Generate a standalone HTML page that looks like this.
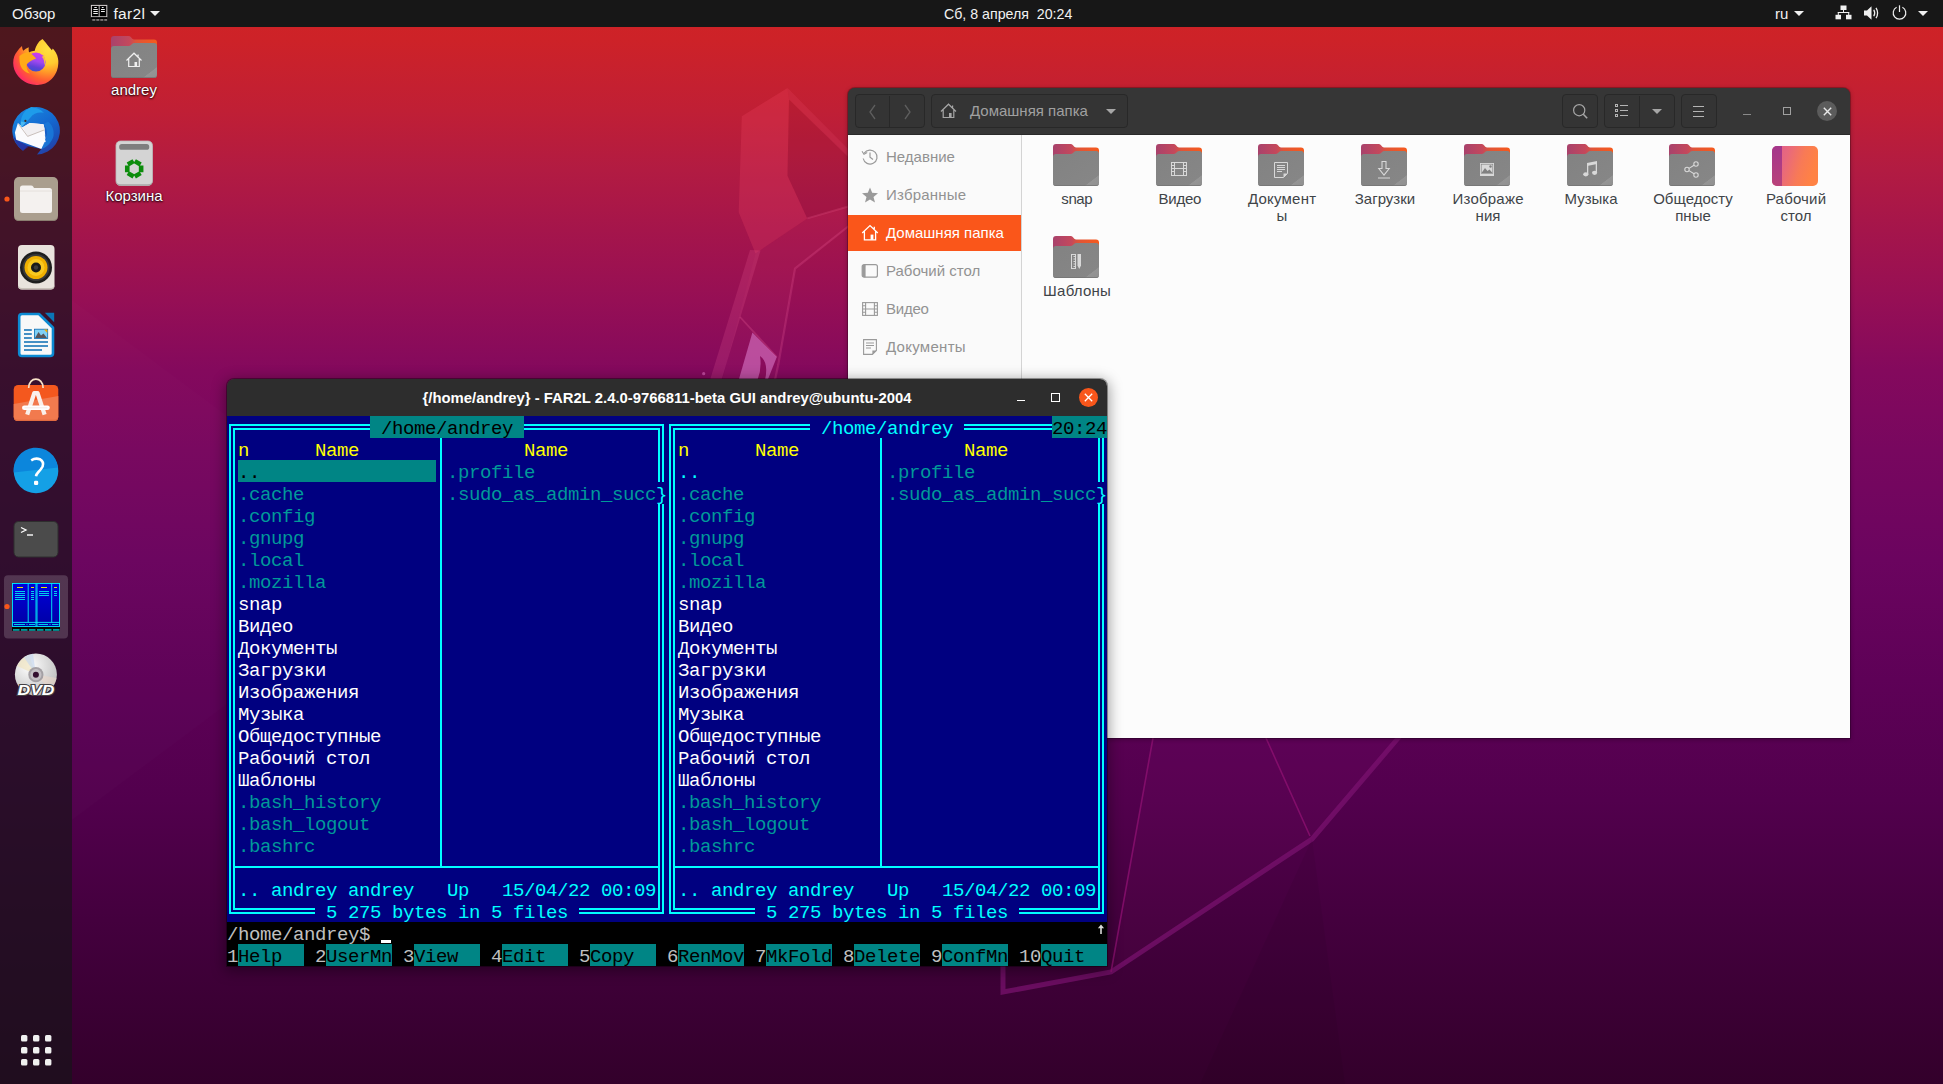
<!DOCTYPE html>
<html><head><meta charset="utf-8">
<style>
*{box-sizing:border-box;margin:0;padding:0}
html,body{width:1943px;height:1084px;overflow:hidden;background:#3a0432}
body{position:relative;font-family:"Liberation Sans",sans-serif;color:#fff}
.abs{position:absolute}
#wall{position:absolute;left:0;top:0;width:1943px;height:1084px;
 background:linear-gradient(180deg,#d02325 0px,#cd2228 40px,#c01f35 110px,#b21b42 170px,#a5154b 230px,#960f55 300px,#84095d 370px,#78075f 450px,#6b045f 560px,#5e0157 680px,#52004d 800px,#44003e 920px,#33002b 1084px);}
#topbar{position:absolute;left:0;top:0;width:1943px;height:27px;background:#171717;font-size:15px}
#dock{position:absolute;left:0;top:27px;width:72px;height:1057px;background:rgba(24,19,25,0.70)}
#far{position:absolute;left:227px;top:379px;width:880px;height:587px;border-radius:7px 7px 0 0;overflow:hidden;box-shadow:0 3px 14px 2px rgba(0,0,0,0.38),0 0 0 1px rgba(0,0,0,0.35)}
#far i{position:absolute;display:block}
#far b{position:absolute;display:block;font:normal 19px/22px "Liberation Mono",monospace;letter-spacing:-0.4019px;white-space:pre;height:22px}
#fartitle{position:absolute;left:0;top:0;width:880px;height:37px;background:#2d2d2d}
#fartxt{position:absolute;left:0;top:0;width:880px;text-align:center;font:bold 14.86px/38px "Liberation Sans",sans-serif;color:#fff;padding-left:0px}
</style></head>
<body>
<div id="wall"></div>
<svg class="abs" style="left:0;top:0" width="1943" height="1084" viewBox="0 0 1943 1084">
<!-- fossa ear -->
<path d="M787.500 88L741.800 116.300L738.700 212.300L755.500 253.400L807.300 218.400L787.500 175.700L789 99.600Z" fill="#ff5070" opacity="0.2"/>
<path d="M787.500 88L850 151V159L789 99.600Z" fill="#ff6080" opacity="0.13"/>
<path d="M789 99.600L850 158V206L807.300 218.400L787.500 175.700Z" fill="#400020" opacity="0.07"/>
<path d="M755.500 253.400L807.300 218.400L850 206V226L795 268.600L778 366L775 380H722Z" fill="#ff5a90" opacity="0.05"/>
<path d="M750 250L710 380H721.500L760.500 250.500Z" fill="#ff70a8" opacity="0.17"/>
<path d="M807.300 218.400L850 206" stroke="#ff70a0" stroke-opacity="0.2" stroke-width="2" fill="none"/>
<path d="M850 225L795 268.600L778.300 364.600L775 380" stroke="#ff70a8" stroke-opacity="0.2" stroke-width="2.200" fill="none"/>
<path d="M740 317L776.800 357" stroke="#ff70a8" stroke-opacity="0.22" stroke-width="1.800" fill="none"/>
<path d="M752.400 332.600L776.800 357L767.700 380H738.700Z" fill="#d878c8" opacity="0.6"/>
<path d="M760 356Q769 362 765 380H757.500Q762 368 760 356Z" fill="#8a0c5c"/>
<circle cx="703.700" cy="373.700" r="1.600" fill="#d060b0" opacity="0.7"/>
<!-- body outline lower right -->
<path d="M1153 738L1111 972L1312 838L1400 738Z" fill="#ff40c0" opacity="0.035"/>
<path d="M1400 736L1312 839L1111 972L1003 992V960" stroke="#7c1270" stroke-opacity="0.7" stroke-width="5" fill="none" stroke-linejoin="miter"/>
<path d="M1153 738L1111 972M1266 738L1310 836" stroke="#8c1070" stroke-opacity="0.8" stroke-width="1.600" fill="none"/>
<!-- faint facets -->
<path d="M72 300L420 560L72 820Z" fill="#ffffff" opacity="0.012"/>
<path d="M1312 839L1200 1084H1345Z" fill="#000000" opacity="0.05"/>
</svg>
<div id="dock"></div>
<svg class="abs" style="left:0;top:27px" width="72" height="1057" viewBox="0 27 72 1057">
<defs>
<radialGradient id="ffg" cx="0.78" cy="0.22" r="1.0"><stop offset="0" stop-color="#ffe040"/><stop offset="0.32" stop-color="#ffcc30"/><stop offset="0.5" stop-color="#ff9a28"/><stop offset="0.68" stop-color="#ff6030"/><stop offset="0.86" stop-color="#ff3060"/><stop offset="1" stop-color="#f0208a"/></radialGradient>
<linearGradient id="ffp" x1="0.6" y1="0" x2="0.35" y2="1"><stop offset="0" stop-color="#d03af0"/><stop offset="0.45" stop-color="#a048f0"/><stop offset="0.75" stop-color="#6040d8"/><stop offset="1" stop-color="#3a50d0"/></linearGradient>
<linearGradient id="tbg" x1="0.15" y1="0" x2="0.8" y2="1"><stop offset="0" stop-color="#1a8ae0"/><stop offset="0.5" stop-color="#1468d0"/><stop offset="0.8" stop-color="#1a50b8"/><stop offset="1" stop-color="#2a3aa0"/></linearGradient>
<linearGradient id="swg" x1="0" y1="0" x2="0" y2="1"><stop offset="0" stop-color="#e8501e"/><stop offset="1" stop-color="#f28a62"/></linearGradient>
<linearGradient id="hlp" x1="0" y1="0" x2="0" y2="1"><stop offset="0" stop-color="#0e86d6"/><stop offset="0.5" stop-color="#0e86d6"/><stop offset="0.5" stop-color="#1a9fe6"/><stop offset="1" stop-color="#1a9fe6"/></linearGradient>
<radialGradient id="dvdg" cx="0.35" cy="0.3" r="0.9"><stop offset="0" stop-color="#ffffff"/><stop offset="0.5" stop-color="#d8d8d8"/><stop offset="1" stop-color="#b0b0b0"/></radialGradient>
</defs>
<!-- firefox -->
<g>
<path d="M42.500 38.900C45 41.500 47 44 48.100 45.800L51.900 50.300L52.800 48.600C54 50 55 51.200 55.800 52.500C57 54.500 57.700 56.500 58 58.600C58.400 60.200 58.400 62 58.300 63.500C58.200 66 57.700 68.500 56.900 70.700C56 73.200 54.600 75.500 53 77.400C51.300 79.500 49.300 81.100 47 82.400C44.600 83.700 42 84.500 39.200 84.800C37 85.100 34.800 85 32.600 84.600C29.800 84.100 27.200 83.200 24.800 81.800C22.200 80.300 20 78.500 18.200 76.300C16.500 74.300 15.200 72 14.300 69.600C13.600 67.500 13.200 65.300 13.200 63C13.200 60.700 13.500 58.400 14.300 56.300C15 54.500 15.900 52.900 17.100 51.400C18.500 49.500 20.100 47.700 22 46.100C22 47.800 22.400 49.400 23.200 50.800C24.800 49.200 26.600 48 28.700 47.200C28.500 49 28.600 50.800 29 52.500C30.800 51.500 32.800 50.900 34.800 50.800C34.900 49.500 35.300 48.200 35.900 46.900C36.700 45 37.800 43.100 39.200 41.400C40.200 40.400 41.300 39.600 42.500 38.900Z" fill="url(#ffg)"/>
<circle cx="36" cy="62" r="9.600" fill="url(#ffp)"/>
<path d="M19.500 56C22 53.500 25.500 52.500 29 52.500C31.500 53.500 34 56 36.200 58.500C33 59.500 29 61.500 26.500 64.500C26.300 68 27.500 71.500 30 73.500C24.500 72.500 20.500 68 19.800 63C19.500 60.500 19.300 58 19.500 56Z" fill="#ffaa18"/>
<path d="M40.500 54.200L44.800 55.600L41.800 56.800C44 59 44.800 62.500 44 65.500C46 62 45.500 57.500 43 54.800Z" fill="#ffc830" opacity="0.9"/>
</g>
<!-- thunderbird -->
<g>
<path d="M37 154.600A23.800 23.800 0 1 0 23 150.700L27.500 146L41.400 149.100Z" fill="url(#tbg)"/>
<path d="M13.200 135.500C14.500 141.500 18 147 23 150.700L29 146.500L16.200 139.700Z" fill="#2a2a98" opacity="0.75"/>
<path d="M20.900 121.500C21.500 114 26.500 108.800 31.500 107.100C36.500 107.600 40.500 109.500 44 113C38.500 111.800 33.500 113.500 30.500 117.500L26 122.500L21.200 127.500C20.200 125.500 20.300 123.500 20.900 121.500Z" fill="#1e9cea"/>
<path d="M17.900 123.100L14.900 132.500L16.200 139.700L41.400 149.100L45.800 141.400L44.700 129.800L43.600 124.200L29.800 123.100L22.600 127.200Z" fill="#fbfbfd"/>
<path d="M22.600 127.200L29.800 123.100L43.600 124.200L44.700 129.800L27.600 136.400Z" fill="#f1eff1"/>
<path d="M18.700 124.200L27.600 136.400L44.700 129.800" stroke="#b4a8a0" stroke-width="0.700" fill="none"/>
<path d="M43.600 124.200C46.500 127 47.500 132 46.500 136L44.600 134.800L46.600 139L44.800 138.400L46.200 142.500L44.500 142L41.400 149.100C47 147.500 52 142 53.500 136C54.500 130 52 124.500 48 121.500Z" fill="#1a78d8" opacity="0.9"/>
<path d="M20.900 121.500L21.200 127.500L26 122.500Z" fill="#4ab8f0"/>
<circle cx="25.400" cy="120.900" r="1.100" fill="#3a2a2a"/>
</g>
<!-- files -->
<g>
<rect x="14" y="177" width="44" height="44" rx="5" fill="#aa9e8e"/>
<path d="M14 215V216Q14 221 19 221H53Q58 221 58 216V215Q58 220 53 220H19Q14 220 14 215Z" fill="#8a7e70"/>
<path d="M20 188Q20 185.5 22.5 185.5H31Q32.5 185.5 33.3 186.8L34 188H49.5Q52 188 52 190.5V210.5Q52 213 49.5 213H22.5Q20 213 20 210.5Z" fill="#f4f1ef"/>
<path d="M20 191H52" stroke="#e2ddd8" stroke-width="0.8"/>
<circle cx="7" cy="199" r="2.6" fill="#fa561a"/>
</g>
<!-- rhythmbox -->
<g>
<rect x="18" y="245" width="36.5" height="44.5" rx="4" fill="#e9e3dd"/>
<path d="M18 284V285.500Q18 289.5 22 289.5H50.500Q54.500 289.5 54.500 285.5V284Q54.500 288 50.500 288H22Q18 288 18 284Z" fill="#c8c0b8"/>
<circle cx="36" cy="267.5" r="16" fill="#1e1e1e"/>
<circle cx="36" cy="267.5" r="13.5" fill="#3a3a3a"/>
<circle cx="36" cy="267.5" r="11.5" fill="#f0b000"/>
<circle cx="36" cy="267.5" r="8.5" fill="#f8c820"/>
<circle cx="36" cy="267.500" r="5" fill="#1a1a1a"/>
<circle cx="36" cy="267.500" r="2.2" fill="#3c3c3c"/>
</g>
<!-- writer -->
<g>
<path d="M22 314H39L53 327.800V353.200Q53 356 50.200 356H22Q19.200 356 19.200 353.200V316.800Q19.200 314 22 314Z" fill="#f8f8f8" stroke="#0c8ad2" stroke-width="2.600" stroke-linejoin="round"/>
<path d="M44.800 312.800H54.200V322.200Z" fill="#0b76b6"/>
<g stroke="#0a6cb2" stroke-width="1.700"><path d="M24 330H31.800M24 334H31.800M24 338H31.800M24 342H48M24 346H48M24 350H42"/></g>
<rect x="34.400" y="329.200" width="13.300" height="9.300" fill="#7fd0f6" stroke="#0a6cb2" stroke-width="0.800"/>
<path d="M35 338L38.500 332L41 335.500L43.500 333.500L47 338Z" fill="#58545a"/>
<path d="M44 329.600H47.300V333Z" fill="#f4a800"/>
</g>
<!-- software -->
<g>
<rect x="13.700" y="385" width="44.600" height="36" rx="4.500" fill="#f4581e"/>
<path d="M13.700 404L58.300 396V416.500Q58.300 421 53.800 421H18.200Q13.700 421 13.700 416.500Z" fill="#f27a4e"/>
<path d="M13.700 415.500V416.500Q13.700 421 18.200 421H53.800Q58.300 421 58.300 416.500V415.500Q58.300 419.800 53.800 419.800H18.200Q13.700 419.800 13.700 415.500Z" fill="#e06a40"/>
<path d="M28.700 388C28.700 376.300 43.100 376.300 43.100 388" stroke="#f8e2c8" stroke-width="1.700" fill="none"/>
<path d="M27.200 414.700L34.300 393H37.500L44.600 414.700" stroke="#faf0ea" stroke-width="4.200" fill="none" stroke-linejoin="round"/>
<rect x="22" y="405.500" width="27.800" height="4.600" rx="2.300" fill="#ffffff"/>
<path d="M24.500 407.800H47.300" stroke="#e8d8d0" stroke-width="0.500"/>
</g>
<!-- help -->
<g>
<circle cx="36" cy="471" r="22.300" fill="#14a0e6"/>
<path d="M13.700 472.600A22.300 22.300 0 0 1 58.100 467.500Z" fill="#0c86dc"/>
<path d="M31.200 460.300Q35.500 457.600 39.800 459.200Q44.300 461.800 42.600 466.500Q41 469.500 38 472.500Q36.300 474.300 36 476.300" stroke="#ffffff" stroke-width="2.600" fill="none" stroke-linecap="butt"/>
<rect x="34" y="480.700" width="4.200" height="4.200" rx="1.200" fill="#ffffff"/>
</g>
<!-- terminal -->
<g>
<rect x="14" y="521.500" width="44" height="35.500" rx="4.500" fill="#4b4b4b" stroke="#2e2e2e" stroke-width="1"/>
<path d="M21 527.500L26 530L21 532.500" stroke="#fff" stroke-width="1.300" fill="none"/>
<path d="M27 535H33" stroke="#fff" stroke-width="1.400"/>
</g>
<!-- far2l -->
<g>
<defs><linearGradient id="f2b" x1="0" y1="0" x2="0" y2="1"><stop offset="0" stop-color="#0000dc"/><stop offset="1" stop-color="#0000a4"/></linearGradient></defs>
<rect x="4" y="575.200" width="64" height="63.300" rx="4" fill="#ffffff" opacity="0.17"/>
<circle cx="7" cy="606.500" r="2.600" fill="#fa561a"/>
<rect x="12" y="583" width="48" height="44" fill="url(#f2b)"/>
<g stroke="#00f0f8" stroke-width="0.900" fill="none">
<rect x="12.450" y="583.450" width="47.100" height="43.100"/>
<path d="M28.200 583.500V622.400M36 583.500V626.500M37 583.500V626.500M51.700 583.500V622.400M12.500 622.400H59.500"/>
</g>
<g stroke="#e8e800" stroke-width="1"><path d="M17 587.500H23M31 587.500H34M41 587.500H47M54 587.500H57"/></g>
<g stroke="#00e8f0" stroke-width="0.900"><path d="M15 591.500H25M15 593.500H25M15 595.500H25M15 597.500H25M15 599.500H25M31 591.500H34M31 593.500H34M31 595.500H34M31 597.500H34M31 599.500H34M39 591.500H49M39 593.500H49M39 595.500H49M54 591.500H57M54 593.500H57M54 595.500H57M14 624.500H25M26.500 624.500H27.500M29 624.500H35M38.500 624.500H48M49.500 624.500H50.500M52 624.500H58.500"/></g>
<rect x="12" y="627" width="48" height="3.800" fill="#080808"/>
<g fill="#00a0a0"><rect x="13" y="629" width="6.500" height="1.800"/><rect x="21" y="629" width="6.500" height="1.800"/><rect x="29" y="629" width="6.500" height="1.800"/><rect x="37" y="629" width="6.500" height="1.800"/><rect x="45" y="629" width="6.500" height="1.800"/><rect x="53" y="629" width="6.500" height="1.800"/></g>
</g>
<!-- dvd -->
<g>
<circle cx="35.900" cy="674.500" r="21" fill="url(#dvdg)"/>
<path d="M35.900 674.500L17 666A21 21 0 0 1 29 654.700Z" fill="#f0e4c0" opacity="0.7"/>
<path d="M35.900 674.500L24 657.200A21 21 0 0 1 33 653.700Z" fill="#c8d8f0" opacity="0.7"/>
<path d="M35.900 674.500L56.500 678A21 21 0 0 1 50 690Z" fill="#f0d8c8" opacity="0.5"/>
<circle cx="35.900" cy="674.700" r="7.600" fill="#a4a0a4"/>
<circle cx="35.900" cy="674.700" r="5.600" fill="#c4c0c4"/>
<circle cx="35.900" cy="674.700" r="3" fill="#341030"/>
<text x="36" y="694.500" text-anchor="middle" font-family="Liberation Sans" font-weight="bold" font-style="italic" font-size="15.500" fill="#fff" stroke="#444044" stroke-width="2.200" paint-order="stroke" textLength="37" lengthAdjust="spacingAndGlyphs">DVD</text>
</g>
<!-- app grid -->
<g fill="#f0f0f0">
<rect x="21" y="1035" width="6.400" height="6.400" rx="1.500"/><rect x="33" y="1035" width="6.400" height="6.400" rx="1.500"/><rect x="45" y="1035" width="6.400" height="6.400" rx="1.500"/>
<rect x="21" y="1047" width="6.400" height="6.400" rx="1.500"/><rect x="33" y="1047" width="6.400" height="6.400" rx="1.500"/><rect x="45" y="1047" width="6.400" height="6.400" rx="1.500"/>
<rect x="21" y="1059" width="6.400" height="6.400" rx="1.500"/><rect x="33" y="1059" width="6.400" height="6.400" rx="1.500"/><rect x="45" y="1059" width="6.400" height="6.400" rx="1.500"/>
</g>
</svg>
<svg class="abs" style="left:111px;top:36px" width="46" height="42" viewBox="0 0 46 42"><use href="#folder"/><g transform="translate(14.500,16)"><path d="M1 8.500L8.500 1.200L16 8.500M3.200 7V14.500H13.800V7M12.600 4.600V2.400" stroke="#f0f0f0" stroke-width="1.200" fill="none"/><rect x="9" y="10" width="2.600" height="4.500" fill="#f0f0f0"/></g></svg>
<div class="abs dlbl" style="left:84px;top:81px;width:100px">andrey</div>
<svg class="abs" style="left:115px;top:140px" width="40" height="47" viewBox="0 0 40 47">
<rect x="1" y="1" width="36.500" height="44.500" rx="4.500" fill="#d4d4d4" stroke="#bdbdbd" stroke-width="0.800"/>
<path d="M1 40V41Q1 45.500 5.500 45.500H33Q37.500 45.500 37.500 41V40Q37.500 44.300 33 44.300H5.500Q1 44.300 1 40Z" fill="#a8a8a8"/>
<rect x="4.200" y="4" width="30" height="5.800" rx="2.600" fill="#7e7e7e"/>
<g transform="translate(19.200,28.800)"><path d="M6.930 4L0 8L-6.930 4L-6.930 -4L0 -8L6.930 -4Z" fill="none" stroke="#0c8c0c" stroke-width="4.600" stroke-dasharray="6.700 1.300" stroke-dashoffset="-0.650"/></g>
</svg>
<div class="abs dlbl" style="left:84px;top:187px;width:100px">Корзина</div>
<style>.dlbl{font:15px/18px "Liberation Sans",sans-serif;color:#fff;text-align:center;text-shadow:0 1px 2px rgba(0,0,0,0.9),0 0 2px rgba(0,0,0,0.6)}</style>
<style>
#naut{position:absolute;left:848px;top:88px;width:1002px;height:650px;border-radius:7px 7px 0 0;overflow:hidden;background:#363636;box-shadow:0 1px 5px rgba(0,0,0,0.32),0 0 0 1px rgba(0,0,0,0.22)}
#nhead{position:absolute;left:0;top:0;width:1002px;height:47px;background:#363636;border-bottom:1px solid #2a2a2a}
#naut .btn{position:absolute;top:6px;height:34px;background:#343434;border:1px solid #282828;border-radius:4px}
#nside{position:absolute;left:0;top:47px;width:174px;height:603px;background:#fafafa;border-right:1px solid #d4d4d4}
#naut .srow{position:absolute;left:0;width:173px;height:36px;font:15px/36px "Liberation Sans",sans-serif;color:#929292;padding-left:38px;white-space:nowrap}
#naut .srow svg{position:absolute;left:13px;top:9px}
#naut .sel{background:#fa561a;color:#fff}
#naut .lbl{position:absolute;width:104px;text-align:center;font:15px/17px "Liberation Sans",sans-serif;color:#3f4448}
#naut svg.fi{position:absolute}
</style>
<svg width="0" height="0" style="position:absolute"><defs>
<linearGradient id="ftab" x1="0" y1="0" x2="1" y2="0"><stop offset="0" stop-color="#a8426c"/><stop offset="0.4" stop-color="#c4485c"/><stop offset="0.55" stop-color="#e05438"/><stop offset="1" stop-color="#f65a1c"/></linearGradient>
<linearGradient id="fbody" x1="0" y1="0" x2="1" y2="1"><stop offset="0" stop-color="#828282"/><stop offset="0.84" stop-color="#868686"/><stop offset="0.85" stop-color="#949494"/><stop offset="1" stop-color="#909090"/></linearGradient>
<linearGradient id="fdesk" x1="0" y1="0" x2="1" y2="0.25"><stop offset="0" stop-color="#de5c8e"/><stop offset="0.35" stop-color="#e8687e"/><stop offset="0.7" stop-color="#f87a56"/><stop offset="1" stop-color="#ff8244"/></linearGradient><linearGradient id="fdeskl" x1="0" y1="0" x2="0" y2="1"><stop offset="0" stop-color="#a4368c"/><stop offset="1" stop-color="#b8427a"/></linearGradient><clipPath id="dclip"><rect x="0" y="0" width="46" height="40" rx="5"/></clipPath>
<g id="folder">
<path d="M3 0H17.500Q19 0 20 1.200L21.300 2.800Q22 3.500 23.200 3.500H43Q46 3.500 46 6.500V20H0V3Q0 0 3 0Z" fill="url(#ftab)"/>
<path d="M0 13Q0 10 3 10H17.500Q19 10 20 8.900L21.300 7.700Q22 7 23.200 7H43Q46 7 46 10V39Q46 42 43 42H3Q0 42 0 39Z" fill="url(#fbody)"/>
<path d="M0 38.300Q0 41.300 3 41.300H43Q46 41.300 46 38.300V39Q46 42 43 42H3Q0 42 0 39Z" fill="#747474"/>
</g>
</defs></svg>
<div id="naut">
<div class="abs" style="left:0;top:47px;width:1002px;height:603px;background:#fcfcfc"></div>
<div id="nhead">
<div class="btn" style="left:7px;width:70px"></div><i class="abs" style="left:41px;top:8px;width:1px;height:31px;background:#282828"></i>
<svg class="abs" style="left:17px;top:14px" width="16" height="20" viewBox="0 0 16 20"><path d="M10 3L5 10L10 17" stroke="#5e5e5e" stroke-width="1.3" fill="none"/></svg>
<svg class="abs" style="left:51px;top:14px" width="16" height="20" viewBox="0 0 16 20"><path d="M6 3L11 10L6 17" stroke="#5e5e5e" stroke-width="1.3" fill="none"/></svg>
<div class="btn" style="left:83px;width:197px"></div>
<svg class="abs" style="left:92px;top:15px" width="17" height="16" viewBox="0 0 17 16"><path d="M1 8.5L8.5 1.2L16 8.5M3.2 7V14.5H13.8V7M12.6 4.6V2.4" stroke="#a6a6a6" stroke-width="1.2" fill="none"/><rect x="9" y="10" width="2.6" height="4.5" fill="#a6a6a6"/></svg>
<span class="abs" style="left:122px;top:14px;font:15px/18px 'Liberation Sans',sans-serif;color:#a0a0a0;white-space:nowrap">Домашняя папка</span>
<i class="abs" style="left:258px;top:21px;width:0;height:0;border-left:5px solid transparent;border-right:5px solid transparent;border-top:5px solid #a6a6a6"></i>
<div class="btn" style="left:714px;width:36px"></div>
<svg class="abs" style="left:723px;top:14px" width="20" height="20" viewBox="0 0 20 20"><circle cx="8.2" cy="8.2" r="5.6" stroke="#a6a6a6" stroke-width="1.2" fill="none"/><path d="M12.3 12.3L16.2 16.2" stroke="#a6a6a6" stroke-width="1.6"/></svg>
<div class="btn" style="left:756px;width:71px"></div><i class="abs" style="left:791px;top:8px;width:1px;height:31px;background:#282828"></i>
<svg class="abs" style="left:767px;top:16px" width="14" height="14" viewBox="0 0 14 14"><g fill="none" stroke="#b4b4b4" stroke-width="1"><rect x="0.5" y="0.5" width="2" height="2"/><rect x="0.5" y="5.5" width="2" height="2"/><rect x="0.5" y="10.5" width="2" height="2"/><path d="M5 1.500H13M5 6.500H13M5 11.500H13"/></g></svg>
<i class="abs" style="left:804px;top:21px;width:0;height:0;border-left:5px solid transparent;border-right:5px solid transparent;border-top:5px solid #a6a6a6"></i>
<div class="btn" style="left:833px;width:36px"></div>
<svg class="abs" style="left:845px;top:17px" width="12" height="12" viewBox="0 0 12 12"><path d="M0 1.500H11M0 6.500H11M0 11.500H11" stroke="#b4b4b4" stroke-width="1"/></svg>
<i class="abs" style="left:895px;top:26px;width:8px;height:1px;background:#8a8a8a"></i>
<i class="abs" style="left:935px;top:19px;width:8px;height:8px;border:1px solid #a0a0a0"></i>
<i class="abs" style="left:969px;top:13px;width:20px;height:20px;border-radius:50%;background:#5c5c5c"></i>
<svg class="abs" style="left:975px;top:19px" width="9" height="9" viewBox="0 0 9 9"><path d="M0.8 0.8L8.2 8.2M8.2 0.8L0.8 8.2" stroke="#e8e8e8" stroke-width="1.4" fill="none"/></svg>
</div>
<div id="nside">

<div class="srow" style="top:4px;letter-spacing:0px"><svg width="18" height="18" viewBox="0 0 18 18"><path d="M3.2 5.2A7 7 0 1 1 2.2 10.5" stroke="#9a9a9a" stroke-width="1.2" fill="none"/><path d="M1 3.2L3 6.2L6.2 4.6" stroke="#9a9a9a" stroke-width="1.1" fill="none"/><path d="M9 4.5V9.3L12 11.5" stroke="#9a9a9a" stroke-width="1.2" fill="none"/></svg>Недавние</div>
<div class="srow" style="top:42px;letter-spacing:0.2px"><svg width="18" height="18" viewBox="0 0 18 18"><path d="M9 1.5L11.2 6.8L17 7.2L12.5 10.9L14 16.5L9 13.4L4 16.5L5.5 10.9L1 7.2L6.8 6.8Z" fill="#9a9a9a"/></svg>Избранные</div>
<div class="srow sel" style="top:80px;letter-spacing:0px"><svg width="18" height="18" viewBox="0 0 18 18"><path d="M1.2 9L9 1.6L16.8 9M3.4 7.4V15.8H14.6V7.4M13.3 5V2.8" stroke="#fff" stroke-width="1.3" fill="none"/><rect x="9.6" y="10.6" width="2.8" height="5.2" fill="#fff"/></svg>Домашняя папка</div>
<div class="srow" style="top:118px;letter-spacing:0px"><svg width="18" height="18" viewBox="0 0 18 18"><rect x="1.2" y="2.6" width="15.2" height="12.6" rx="2" stroke="#9a9a9a" stroke-width="1.2" fill="none"/><path d="M1.2 4.6Q1.2 2.6 3.2 2.6H4.6V15.2H3.2Q1.2 15.2 1.2 13.2Z" fill="#9a9a9a"/></svg>Рабочий стол</div>
<div class="srow" style="top:156px;letter-spacing:-0.25px"><svg width="18" height="18" viewBox="0 0 18 18"><g stroke="#9a9a9a" stroke-width="1.1" fill="none"><rect x="1.6" y="2.6" width="14.8" height="12.8"/><path d="M4.6 2.6V15.4M13.4 2.6V15.4M4.6 9H13.4M1.6 5.8H4.6M1.6 9H4.6M1.6 12.2H4.6M13.4 5.8H16.4M13.4 9H16.4M13.4 12.2H16.4"/></g></svg>Видео</div>
<div class="srow" style="top:194px;letter-spacing:0.28px"><svg width="18" height="18" viewBox="0 0 18 18"><g stroke="#9a9a9a" stroke-width="1.1" fill="none"><path d="M2.6 1.6H15.4V12.4L11.4 16.4H2.6Z"/><path d="M5 5H13M5 7.5H13M5 10H10"/></g><path d="M11.4 16.4V12.4H15.4Z" fill="#9a9a9a"/></svg>Документы</div>
</div>
<svg class="fi" style="left:205px;top:56px" width="46" height="42" viewBox="0 0 46 42"><use href="#folder"/><g transform="translate(0,1)"></g></svg>
<div class="lbl" style="left:177px;top:102px"><span style="letter-spacing:-0.4px;margin-right:0.4px">snap</span></div>
<svg class="fi" style="left:308px;top:56px" width="46" height="42" viewBox="0 0 46 42"><use href="#folder"/><g transform="translate(0,1)"><g stroke="#d8d8d8" stroke-width="1" fill="none"><rect x="15.5" y="17.5" width="15" height="13"/><path d="M18.500 17.500V30.500M27.500 17.500V30.500M18.500 23.500H27.500M15.500 20.500H18.500M15.500 23.500H18.500M15.500 26.500H18.500M27.500 20.500H30.500M27.500 23.500H30.500M27.500 26.500H30.500"/></g></g></svg>
<div class="lbl" style="left:280px;top:102px"><span style="letter-spacing:-0.22px;margin-right:0.22px">Видео</span></div>
<svg class="fi" style="left:410px;top:56px" width="46" height="42" viewBox="0 0 46 42"><use href="#folder"/><g transform="translate(0,1)"><g stroke="#d8d8d8" stroke-width="1" fill="none"><path d="M16.5 17.5H29.5V28.5L25.5 32.5H16.5Z"/><path d="M19 20.500H27M19 22.500H27M19 24.500H27M19 26.500H24"/></g><path d="M25.500 32.500V28.500H29.500Z" fill="#d8d8d8"/></g></svg>
<div class="lbl" style="left:382px;top:102px"><span style="letter-spacing:0.24px;margin-right:-0.24px">Документ</span><br>ы</div>
<svg class="fi" style="left:513px;top:56px" width="46" height="42" viewBox="0 0 46 42"><use href="#folder"/><g transform="translate(0,1)"><g stroke="#d8d8d8" stroke-width="1.1" fill="none"><path d="M21 16.5H25V23.5H28.2L23 30L17.8 23.5H21Z"/><path d="M17 33H29"/></g></g></svg>
<div class="lbl" style="left:485px;top:102px">Загрузки</div>
<svg class="fi" style="left:616px;top:56px" width="46" height="42" viewBox="0 0 46 42"><use href="#folder"/><g transform="translate(0,1)"><rect x="16" y="18" width="14" height="13" fill="#d8d8d8"/><path d="M17.5 28L21 23L23.5 26L25.5 24.5L28.5 28Z" fill="#808080"/><circle cx="26.5" cy="21.5" r="1.2" fill="#808080"/><rect x="17.2" y="19.2" width="11.6" height="9.3" fill="none" stroke="#808080" stroke-width="0.6"/></g></svg>
<div class="lbl" style="left:588px;top:102px"><span style="letter-spacing:0.24px;margin-right:-0.24px">Изображе</span><br>ния</div>
<svg class="fi" style="left:719px;top:56px" width="46" height="42" viewBox="0 0 46 42"><use href="#folder"/><g transform="translate(0,1)"><g fill="#d8d8d8"><path d="M20 18L30 16V19L21.3 20.8V29H20Z"/><rect x="28.7" y="17" width="1.3" height="10.5"/><ellipse cx="18.8" cy="29.3" rx="2.6" ry="2.1"/><ellipse cx="27.6" cy="27.8" rx="2.6" ry="2.1"/></g></g></svg>
<div class="lbl" style="left:691px;top:102px">Музыка</div>
<svg class="fi" style="left:821px;top:56px" width="46" height="42" viewBox="0 0 46 42"><use href="#folder"/><g transform="translate(0,1)"><g stroke="#d8d8d8" stroke-width="1.1" fill="none"><circle cx="27" cy="19" r="2.2"/><circle cx="18" cy="24.5" r="2.2"/><circle cx="27" cy="30" r="2.2"/><path d="M20 23.4L25 20.2M20 25.6L25 28.8"/></g></g></svg>
<div class="lbl" style="left:793px;top:102px">Общедосту<br>пные</div>
<svg class="fi" style="left:924px;top:58px" width="46" height="40" viewBox="0 0 46 40"><g clip-path="url(#dclip)"><rect x="0" y="0" width="46" height="40" fill="url(#fdesk)"/><rect x="0" y="0" width="10" height="40" fill="url(#fdeskl)"/></g></svg>
<div class="lbl" style="left:896px;top:102px"><span style="letter-spacing:0.18px;margin-right:-0.18px">Рабочий</span><br>стол</div>
<svg class="fi" style="left:205px;top:148px" width="46" height="42" viewBox="0 0 46 42"><use href="#folder"/><g transform="translate(0,1)"><g stroke="#d8d8d8" stroke-width="1" fill="none"><rect x="18.5" y="17.5" width="4" height="14"/><path d="M20.5 19.5H22.5M20.5 22H22.5M20.5 24.5H22.5M20.5 27H22.5M20.5 29.5H22.5"/></g><path d="M24.5 17H28V28.5L26.25 32L24.5 28.5Z" fill="#d8d8d8"/></g></svg>
<div class="lbl" style="left:177px;top:194px"><span style="letter-spacing:0.24px;margin-right:-0.24px">Шаблоны</span></div>
</div>
<div id="far">
<div id="fartitle"><span id="fartxt">{/home/andrey} - FAR2L 2.4.0-9766811-beta GUI andrey@ubuntu-2004</span>
<i style="left:790px;top:21px;width:8px;height:1px;background:#fff"></i>
<i style="left:824px;top:14px;width:9px;height:9px;border:1px solid #fff"></i>
<i style="left:852px;top:9px;width:19px;height:19px;border-radius:50%;background:#f8561b"></i>
<svg style="position:absolute;left:857px;top:14px" width="9" height="9" viewBox="0 0 9 9"><path d="M0.8 0.8L8.2 8.2M8.2 0.8L0.8 8.2" stroke="#fff" stroke-width="1.3" fill="none"/></svg>
</div>
<i style="left:0px;top:37px;width:880px;height:506px;background:#000080"></i>
<i style="left:0px;top:543px;width:880px;height:44px;background:#000000"></i>
<i style="left:2px;top:45px;width:435px;height:2px;background:#00ffff"></i>
<i style="left:6px;top:49px;width:427px;height:2px;background:#00ffff"></i>
<i style="left:6px;top:529px;width:427px;height:2px;background:#00ffff"></i>
<i style="left:2px;top:533px;width:435px;height:2px;background:#00ffff"></i>
<i style="left:2px;top:45px;width:2px;height:490px;background:#00ffff"></i>
<i style="left:6px;top:49px;width:2px;height:482px;background:#00ffff"></i>
<i style="left:435px;top:45px;width:2px;height:490px;background:#00ffff"></i>
<i style="left:431px;top:49px;width:2px;height:482px;background:#00ffff"></i>
<i style="left:213px;top:59px;width:2px;height:430px;background:#00ffff"></i>
<i style="left:8px;top:487px;width:423px;height:2px;background:#00ffff"></i>
<i style="left:429px;top:103px;width:11px;height:22px;background:#000080"></i>
<i style="left:143px;top:37px;width:154px;height:22px;background:#008585"></i>
<b style="left:143px;top:38.5px;color:#000;"> /home/andrey </b>
<i style="left:88px;top:521px;width:264px;height:22px;background:#000080"></i>
<b style="left:88px;top:522.5px;color:#00ffff;"> 5 275 bytes in 5 files </b>
<b style="left:11px;top:60.5px;color:#ffff00;">n</b>
<b style="left:88px;top:60.5px;color:#ffff00;">Name</b>
<b style="left:297px;top:60.5px;color:#ffff00;">Name</b>
<i style="left:11px;top:81px;width:198px;height:22px;background:#008585"></i>
<b style="left:11px;top:82.5px;color:#000;">..                </b>
<b style="left:11px;top:104.5px;color:#009999;">.cache</b>
<b style="left:11px;top:126.5px;color:#009999;">.config</b>
<b style="left:11px;top:148.5px;color:#009999;">.gnupg</b>
<b style="left:11px;top:170.5px;color:#009999;">.local</b>
<b style="left:11px;top:192.5px;color:#009999;">.mozilla</b>
<b style="left:11px;top:214.5px;color:#ffffff;">snap</b>
<b style="left:11px;top:236.5px;color:#ffffff;">Видео</b>
<b style="left:11px;top:258.5px;color:#ffffff;">Документы</b>
<b style="left:11px;top:280.5px;color:#ffffff;">Загрузки</b>
<b style="left:11px;top:302.5px;color:#ffffff;">Изображения</b>
<b style="left:11px;top:324.5px;color:#ffffff;">Музыка</b>
<b style="left:11px;top:346.5px;color:#ffffff;">Общедоступные</b>
<b style="left:11px;top:368.5px;color:#ffffff;">Рабочий стол</b>
<b style="left:11px;top:390.5px;color:#ffffff;">Шаблоны</b>
<b style="left:11px;top:412.5px;color:#009999;">.bash_history</b>
<b style="left:11px;top:434.5px;color:#009999;">.bash_logout</b>
<b style="left:11px;top:456.5px;color:#009999;">.bashrc</b>
<b style="left:220px;top:82.5px;color:#009999;">.profile</b>
<b style="left:220px;top:104.5px;color:#009999;">.sudo_as_admin_succ</b>
<b style="left:429px;top:104.5px;color:#00ffff;">}</b>
<b style="left:11px;top:500.5px;color:#00ffff;">.. andrey andrey   Up   15/04/22 00:09</b>
<i style="left:442px;top:45px;width:383px;height:2px;background:#00ffff"></i>
<i style="left:446px;top:49px;width:379px;height:2px;background:#00ffff"></i>
<i style="left:446px;top:529px;width:427px;height:2px;background:#00ffff"></i>
<i style="left:442px;top:533px;width:435px;height:2px;background:#00ffff"></i>
<i style="left:442px;top:45px;width:2px;height:490px;background:#00ffff"></i>
<i style="left:446px;top:49px;width:2px;height:482px;background:#00ffff"></i>
<i style="left:875px;top:59px;width:2px;height:476px;background:#00ffff"></i>
<i style="left:871px;top:59px;width:2px;height:472px;background:#00ffff"></i>
<i style="left:653px;top:59px;width:2px;height:430px;background:#00ffff"></i>
<i style="left:448px;top:487px;width:423px;height:2px;background:#00ffff"></i>
<i style="left:869px;top:103px;width:11px;height:22px;background:#000080"></i>
<i style="left:583px;top:37px;width:154px;height:22px;background:#000080"></i>
<b style="left:583px;top:38.5px;color:#00ffff;"> /home/andrey </b>
<i style="left:528px;top:521px;width:264px;height:22px;background:#000080"></i>
<b style="left:528px;top:522.5px;color:#00ffff;"> 5 275 bytes in 5 files </b>
<b style="left:451px;top:60.5px;color:#ffff00;">n</b>
<b style="left:528px;top:60.5px;color:#ffff00;">Name</b>
<b style="left:737px;top:60.5px;color:#ffff00;">Name</b>
<b style="left:451px;top:82.5px;color:#00ffff;">..</b>
<b style="left:451px;top:104.5px;color:#009999;">.cache</b>
<b style="left:451px;top:126.5px;color:#009999;">.config</b>
<b style="left:451px;top:148.5px;color:#009999;">.gnupg</b>
<b style="left:451px;top:170.5px;color:#009999;">.local</b>
<b style="left:451px;top:192.5px;color:#009999;">.mozilla</b>
<b style="left:451px;top:214.5px;color:#ffffff;">snap</b>
<b style="left:451px;top:236.5px;color:#ffffff;">Видео</b>
<b style="left:451px;top:258.5px;color:#ffffff;">Документы</b>
<b style="left:451px;top:280.5px;color:#ffffff;">Загрузки</b>
<b style="left:451px;top:302.5px;color:#ffffff;">Изображения</b>
<b style="left:451px;top:324.5px;color:#ffffff;">Музыка</b>
<b style="left:451px;top:346.5px;color:#ffffff;">Общедоступные</b>
<b style="left:451px;top:368.5px;color:#ffffff;">Рабочий стол</b>
<b style="left:451px;top:390.5px;color:#ffffff;">Шаблоны</b>
<b style="left:451px;top:412.5px;color:#009999;">.bash_history</b>
<b style="left:451px;top:434.5px;color:#009999;">.bash_logout</b>
<b style="left:451px;top:456.5px;color:#009999;">.bashrc</b>
<b style="left:660px;top:82.5px;color:#009999;">.profile</b>
<b style="left:660px;top:104.5px;color:#009999;">.sudo_as_admin_succ</b>
<b style="left:869px;top:104.5px;color:#00ffff;">}</b>
<b style="left:451px;top:500.5px;color:#00ffff;">.. andrey andrey   Up   15/04/22 00:09</b>
<i style="left:825px;top:37px;width:55px;height:22px;background:#008585"></i>
<b style="left:825px;top:38.5px;color:#000;">20:24</b>
<b style="left:0px;top:544.5px;color:#c0c0c0;">/home/andrey$</b>
<i style="left:154px;top:561px;width:10px;height:3px;background:#ffffff"></i>
<svg style="position:absolute;left:870px;top:545px" width="9" height="11" viewBox="0 0 9 11"><path d="M4 0.600L7.100 4.300H4.800V10H3.200V4.300H0.900Z" fill="#d8d8d8"/></svg>
<b style="left:0px;top:566.5px;color:#c0c0c0;">1</b>
<i style="left:11px;top:565px;width:66px;height:22px;background:#008585"></i>
<b style="left:11px;top:566.5px;color:#000;">Help  </b>
<b style="left:88px;top:566.5px;color:#c0c0c0;">2</b>
<i style="left:99px;top:565px;width:66px;height:22px;background:#008585"></i>
<b style="left:99px;top:566.5px;color:#000;">UserMn</b>
<b style="left:176px;top:566.5px;color:#c0c0c0;">3</b>
<i style="left:187px;top:565px;width:66px;height:22px;background:#008585"></i>
<b style="left:187px;top:566.5px;color:#000;">View  </b>
<b style="left:264px;top:566.5px;color:#c0c0c0;">4</b>
<i style="left:275px;top:565px;width:66px;height:22px;background:#008585"></i>
<b style="left:275px;top:566.5px;color:#000;">Edit  </b>
<b style="left:352px;top:566.5px;color:#c0c0c0;">5</b>
<i style="left:363px;top:565px;width:66px;height:22px;background:#008585"></i>
<b style="left:363px;top:566.5px;color:#000;">Copy  </b>
<b style="left:440px;top:566.5px;color:#c0c0c0;">6</b>
<i style="left:451px;top:565px;width:66px;height:22px;background:#008585"></i>
<b style="left:451px;top:566.5px;color:#000;">RenMov</b>
<b style="left:528px;top:566.5px;color:#c0c0c0;">7</b>
<i style="left:539px;top:565px;width:66px;height:22px;background:#008585"></i>
<b style="left:539px;top:566.5px;color:#000;">MkFold</b>
<b style="left:616px;top:566.5px;color:#c0c0c0;">8</b>
<i style="left:627px;top:565px;width:66px;height:22px;background:#008585"></i>
<b style="left:627px;top:566.5px;color:#000;">Delete</b>
<b style="left:704px;top:566.5px;color:#c0c0c0;">9</b>
<i style="left:715px;top:565px;width:66px;height:22px;background:#008585"></i>
<b style="left:715px;top:566.5px;color:#000;">ConfMn</b>
<b style="left:792px;top:566.5px;color:#c0c0c0;">10</b>
<i style="left:814px;top:565px;width:66px;height:22px;background:#008585"></i>
<b style="left:814px;top:566.5px;color:#000;">Quit  </b>
</div>
<div id="topbar">
<span class="abs" style="left:12px;top:5px;font:15px/18px 'Liberation Sans',sans-serif;color:#f2f2f2">Обзор</span>
<svg class="abs" style="left:90px;top:4px" width="18" height="18" viewBox="0 0 18 18">
<rect x="1.400" y="1.400" width="15.400" height="11.400" fill="#000" stroke="#d6d0d0" stroke-width="1"/>
<path d="M9.200 1.400V12.800" stroke="#d6d0d0" stroke-width="0.900"/>
<g stroke="#f0f0f0" stroke-width="1"><path d="M4.300 3.500H6.800M3.300 5.500H7.800M3.300 7.500H7.800M3.300 9.500H7.800M11.800 3.500H13.600M11 5.500H14.800M11 7.500H14.800"/></g>
<rect x="1" y="13.300" width="16.200" height="1.600" fill="#000"/>
<g fill="#a8a0a0"><rect x="2.300" y="15.300" width="3" height="1.300"/><rect x="6.300" y="15.300" width="3" height="1.300"/><rect x="10.300" y="15.300" width="3" height="1.300"/><rect x="14.300" y="15.300" width="2.800" height="1.300"/></g>
</svg>
<span class="abs" style="left:113.500px;top:5px;font:15.500px/18px 'Liberation Sans',sans-serif;letter-spacing:0.3px;color:#f2f2f2">far2l</span>
<i class="abs" style="left:150px;top:11px;width:0;height:0;border-left:5px solid transparent;border-right:5px solid transparent;border-top:5px solid #f0f0f0"></i>
<span class="abs" style="left:944px;top:4.500px;font:14.200px/18px 'Liberation Sans',sans-serif;color:#f2f2f2;white-space:pre;word-spacing:0px">Сб, 8 апреля  20:24</span>
<span class="abs" style="left:1775px;top:5px;font:15px/18px 'Liberation Sans',sans-serif;color:#f2f2f2">ru</span>
<i class="abs" style="left:1794px;top:11px;width:0;height:0;border-left:5px solid transparent;border-right:5px solid transparent;border-top:5px solid #f0f0f0"></i>
<!-- network -->
<svg class="abs" style="left:1835px;top:5px" width="17" height="15" viewBox="0 0 17 15"><g fill="#f0f0f0"><rect x="5.500" y="0.500" width="6" height="4.500"/><rect x="0.500" y="9.800" width="5.500" height="4.500"/><rect x="11" y="9.800" width="5.500" height="4.500"/><rect x="8" y="5" width="1" height="2.500"/><rect x="2.800" y="7" width="11.400" height="1"/><rect x="2.800" y="7" width="1" height="3"/><rect x="13.200" y="7" width="1" height="3"/></g></svg>
<!-- volume -->
<svg class="abs" style="left:1863px;top:5px" width="18" height="16" viewBox="0 0 18 16"><path d="M1 5.500H4L8.500 1.200V14.800L4 10.500H1Z" fill="#f0f0f0"/><path d="M10.800 4.800Q12.600 8 10.800 11.200" stroke="#f0f0f0" stroke-width="1.300" fill="none"/><path d="M13 2.800Q16.200 8 13 13.200" stroke="#f0f0f0" stroke-width="1.300" fill="none"/><path d="M15.200 1Q19.500 8 15.200 15" stroke="#9a9a9a" stroke-width="1.100" fill="none" opacity="0.0"/></svg>
<!-- power -->
<svg class="abs" style="left:1892px;top:5px" width="15" height="15" viewBox="0 0 15 15"><path d="M4.600 2.300A6.300 6.300 0 1 0 10.400 2.300" stroke="#f0f0f0" stroke-width="1.200" fill="none"/><path d="M7.500 0.300V7" stroke="#f0f0f0" stroke-width="1.200"/></svg>
<i class="abs" style="left:1918px;top:11px;width:0;height:0;border-left:5px solid transparent;border-right:5px solid transparent;border-top:5px solid #f0f0f0"></i>
</div>
</body></html>
